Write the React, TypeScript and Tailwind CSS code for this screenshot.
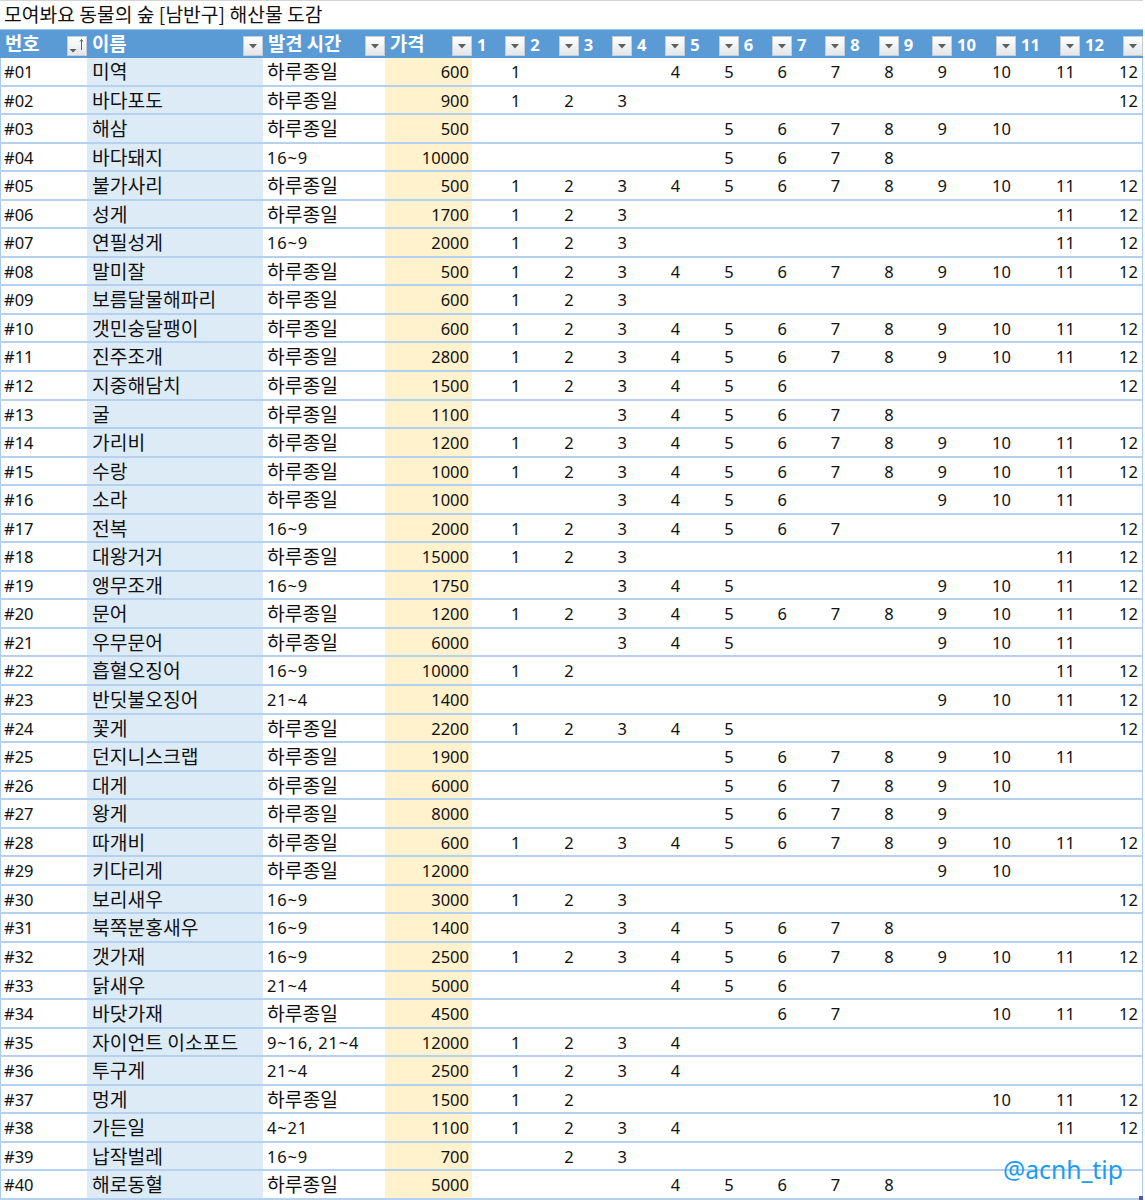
const ALL = [1, 2, 3, 4, 5, 6, 7, 8, 9, 10, 11, 12];
const DAY = '하루종일';

type Row = [string, string, number, number[]];

const rows: Row[] = [
  ['미역', DAY, 600, [1, 4, 5, 6, 7, 8, 9, 10, 11, 12]],
  ['바다포도', DAY, 900, [1, 2, 3, 12]],
  ['해삼', DAY, 500, [5, 6, 7, 8, 9, 10]],
  ['바다돼지', '16~9', 10000, [5, 6, 7, 8]],
  ['불가사리', DAY, 500, ALL],
  ['성게', DAY, 1700, [1, 2, 3, 11, 12]],
  ['연필성게', '16~9', 2000, [1, 2, 3, 11, 12]],
  ['말미잘', DAY, 500, ALL],
  ['보름달물해파리', DAY, 600, [1, 2, 3]],
  ['갯민숭달팽이', DAY, 600, ALL],
  ['진주조개', DAY, 2800, ALL],
  ['지중해담치', DAY, 1500, [1, 2, 3, 4, 5, 6, 12]],
  ['굴', DAY, 1100, [3, 4, 5, 6, 7, 8]],
  ['가리비', DAY, 1200, ALL],
  ['수랑', DAY, 1000, ALL],
  ['소라', DAY, 1000, [3, 4, 5, 6, 9, 10, 11]],
  ['전복', '16~9', 2000, [1, 2, 3, 4, 5, 6, 7, 12]],
  ['대왕거거', DAY, 15000, [1, 2, 3, 11, 12]],
  ['앵무조개', '16~9', 1750, [3, 4, 5, 9, 10, 11, 12]],
  ['문어', DAY, 1200, ALL],
  ['우무문어', DAY, 6000, [3, 4, 5, 9, 10, 11]],
  ['흡혈오징어', '16~9', 10000, [1, 2, 11, 12]],
  ['반딧불오징어', '21~4', 1400, [9, 10, 11, 12]],
  ['꽃게', DAY, 2200, [1, 2, 3, 4, 5, 12]],
  ['던지니스크랩', DAY, 1900, [5, 6, 7, 8, 9, 10, 11]],
  ['대게', DAY, 6000, [5, 6, 7, 8, 9, 10]],
  ['왕게', DAY, 8000, [5, 6, 7, 8, 9]],
  ['따개비', DAY, 600, ALL],
  ['키다리게', DAY, 12000, [9, 10]],
  ['보리새우', '16~9', 3000, [1, 2, 3, 12]],
  ['북쪽분홍새우', '16~9', 1400, [3, 4, 5, 6, 7, 8]],
  ['갯가재', '16~9', 2500, ALL],
  ['닭새우', '21~4', 5000, [4, 5, 6]],
  ['바닷가재', DAY, 4500, [6, 7, 10, 11, 12]],
  ['자이언트 이소포드', '9~16, 21~4', 12000, [1, 2, 3, 4]],
  ['투구게', '21~4', 2500, [1, 2, 3, 4]],
  ['멍게', DAY, 1500, [1, 2, 10, 11, 12]],
  ['가든일', '4~21', 1100, [1, 2, 3, 4, 11, 12]],
  ['납작벌레', '16~9', 700, [2, 3]],
  ['해로동혈', DAY, 5000, [4, 5, 6, 7, 8]],
];

const grid =
  'grid grid-cols-[87px_176px_122px_87px_repeat(9,53.33px)_64px_64px_63px]';
const kr = "font-['Noto_Sans_CJK_KR',sans-serif]";
const num = "font-['Noto_Sans',sans-serif]";

function FilterButton({ sorted }: { sorted?: boolean }) {
  return (
    <span className="absolute right-0 top-[6px] h-[20px] w-[20px] border border-[#c6cdd6] bg-gradient-to-b from-white to-[#e3e6ea]">
      <svg width="20" height="20" viewBox="0 0 20 20" className="absolute left-[-1px] top-[-1px]">
        {sorted ? (
          <>
            <path d="M2.500 13h7l-3.500 3.500z" fill="#5f5f5f" />
            <path d="M14.500 14V3.500M13 5.500l1.500-2 1.500 2" stroke="#5f5f5f" strokeWidth="1" fill="none" />
          </>
        ) : (
          <path d="M6 8h8l-4 4.500z" fill="#5f5f5f" />
        )}
      </svg>
    </span>
  );
}

function HeaderCell({ label, sorted, korean }: { label: string; sorted?: boolean; korean?: boolean }) {
  return (
    <div className="relative h-[28px]">
      <span
        className={`absolute left-[5px] top-0 whitespace-nowrap font-bold text-white ${
          korean ? `${kr} text-[18.800px] leading-[25px]` : `${num} text-[16.500px] leading-[29px]`
        }`}
      >
        {label}
      </span>
      <FilterButton sorted={sorted} />
    </div>
  );
}

export default function App() {
  return (
    <div className="relative h-[1200px] w-[1145px] overflow-hidden bg-white text-[#111]">
      <div className="w-[1143px] border-t border-[#d4d4d4]">
        <div className={`h-[28px] pl-[4px] text-[19.300px] leading-[26px] ${kr}`}>
          모여봐요 동물의 숲 [남반구] 해산물 도감
        </div>

        <div className={`${grid} border-t border-[#9dc3e6] bg-[#5b9bd5]`}>
          <HeaderCell label="번호" sorted korean />
          <HeaderCell label="이름" korean />
          <HeaderCell label="발견 시간" korean />
          <HeaderCell label="가격" korean />
          {ALL.map((m) => (
            <HeaderCell key={m} label={String(m)} />
          ))}
        </div>

        <div className="border-l border-r border-[#a9cbee]">
          {rows.map(([name, time, price, months], i) => (
            <div
              key={i}
              className={`${grid} ml-[-1px] h-[28.550px] auto-rows-[26.550px] border-b-2 border-[#b4d2f0] leading-[28px]`}
            >
              <div className={`pl-[4px] text-[16.500px] ${num}`}>#{String(i + 1).padStart(2, '0')}</div>
              <div className={`whitespace-nowrap bg-[#ddebf7] pl-[5px] text-[19.300px] leading-[27px] ${kr}`}>{name}</div>
              <div
                className={`whitespace-nowrap pl-[4px] ${
                  time === DAY
                    ? `text-[19.300px] leading-[27px] ${kr}`
                    : `text-[16.500px] tracking-[0.800px] ${num}`
                }`}
              >
                {time}
              </div>
              <div className={`bg-[#fff2cc] pr-[3px] text-right text-[16.500px] ${num}`}>{price}</div>
              {ALL.map((m) => (
                <div key={m} className={`pr-[5px] text-right text-[16.500px] ${num}`}>
                  {months.includes(m) ? m : ''}
                </div>
              ))}
            </div>
          ))}
        </div>
      </div>

      <div className={`absolute left-[1003px] top-[1152px] text-[24.700px] leading-[36px] text-[#1c9cf0] ${num}`}>
        @acnh_tip
      </div>
      <div className="absolute left-[1139px] top-[1196px] h-[4px] w-[4px] bg-[#4a5aa8]" />
    </div>
  );
}
